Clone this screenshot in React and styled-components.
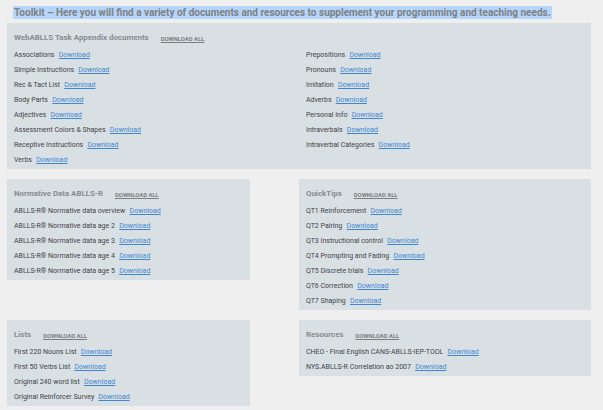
import React from "react";
import styled, { createGlobalStyle } from "styled-components";

const Global = createGlobalStyle`
  html, body { margin: 0; padding: 0; background: #efefef; }
  body { font-family: Roboto, "Liberation Sans", Arial, sans-serif; }
`;

const Page = styled.div`
  width: 603px;
  height: 410px;
  overflow: hidden;
  background: #efefef;
  box-sizing: border-box;
  padding-left: 7px;
`;

const TitleBar = styled.div`
  height: 23px;
  box-sizing: border-box;
  padding-top: 1px;
  padding-left: 6px;
`;

const Title = styled.span`
  display: inline-block;
  background: #b5d5fb;
  color: #7d8184;
  font-weight: 700;
  font-size: 10px;
  line-height: 13px;
  padding: 0 1px;
`;

const Grid = styled.div`
  display: grid;
  grid-template-columns: 243px 292px;
  column-gap: 49px;
  row-gap: 10px;
  align-items: start;
`;

const Panel = styled.section`
  background: #d9e0e3;
  box-sizing: border-box;
  padding: 7px 7px 1.5px;
  grid-column: ${(p) => (p.$wide ? "1 / -1" : "auto")};
`;

const Header = styled.div`
  display: flex;
  align-items: center;
  height: 16px;
  gap: 12px;
  margin-bottom: 1.5px;
`;

const Heading = styled.h2`
  margin: 0;
  font-size: 7.9px;
  font-weight: 700;
  color: #888c8f;
  line-height: 16px;
`;

const DownloadAll = styled.a`
  font-size: 5.9px;
  font-weight: 700;
  color: #7c7f82;
  text-decoration: underline;
  text-transform: uppercase;
  line-height: 16px;
  margin-top: 1px;
`;

const Columns = styled.div`
  display: grid;
  grid-template-columns: 1fr 1fr;
  column-gap: 14px;
`;

const List = styled.ul`
  list-style: none;
  margin: 0;
  padding: 0;
`;

const Row = styled.li`
  font-size: 7px;
  line-height: 15px;
  color: #3f4346;
  white-space: nowrap;
`;

const Link = styled.a`
  color: #3f86d4;
  text-decoration: underline;
  margin-left: 2.5px;
`;

const Item = ({ label }) => (
  <Row>
    {label} <Link href="#">Download</Link>
  </Row>
);

const Section = ({ title, items }) => (
  <Panel>
    <Header>
      <Heading>{title}</Heading>
      <DownloadAll href="#">Download all</DownloadAll>
    </Header>
    <List>
      {items.map((it) => (
        <Item key={it} label={it} />
      ))}
    </List>
  </Panel>
);

const taskLeft = [
  "Associations",
  "Simple Instructions",
  "Rec & Tact List",
  "Body Parts",
  "Adjectives",
  "Assessment Colors & Shapes",
  "Receptive Instructions",
  "Verbs",
];
const taskRight = [
  "Prepositions",
  "Pronouns",
  "Imitation",
  "Adverbs",
  "Personal Info",
  "Intraverbals",
  "Intraverbal Categories",
];

const normative = [
  "ABLLS-R® Normative data overview",
  "ABLLS-R® Normative data age 2",
  "ABLLS-R® Normative data age 3",
  "ABLLS-R® Normative data age 4",
  "ABLLS-R® Normative data age 5",
];

const quick = [
  "QT1 Reinforcement",
  "QT2 Pairing",
  "QT3 Instructional control",
  "QT4 Prompting and Fading",
  "QT5 Discrete trials",
  "QT6 Correction",
  "QT7 Shaping",
];

const lists = [
  "First 220 Nouns List",
  "First 50 Verbs List",
  "Original 240 word list",
  "Original Reinforcer Survey",
];

const resources = [
  "CHEO - Final English CANS-ABLLS-IEP-TOOL",
  "NYS.ABLLS-R Correlation ao 2007",
];

export default function App() {
  return (
    <>
      <Global />
      <Page>
        <TitleBar>
          <Title>
            Toolkit – Here you will find a variety of documents and resources to
            supplement your programming and teaching needs.
          </Title>
        </TitleBar>
        <Grid>
          <Panel $wide>
            <Header>
              <Heading>WebABLLS Task Appendix documents</Heading>
              <DownloadAll href="#">Download all</DownloadAll>
            </Header>
            <Columns>
              <List>
                {taskLeft.map((it) => (
                  <Item key={it} label={it} />
                ))}
              </List>
              <List>
                {taskRight.map((it) => (
                  <Item key={it} label={it} />
                ))}
              </List>
            </Columns>
          </Panel>
          <Section title="Normative Data ABLLS-R" items={normative} />
          <Section title="QuickTips" items={quick} />
          <Section title="Lists" items={lists} />
          <Section title="Resources" items={resources} />
        </Grid>
      </Page>
    </>
  );
}
